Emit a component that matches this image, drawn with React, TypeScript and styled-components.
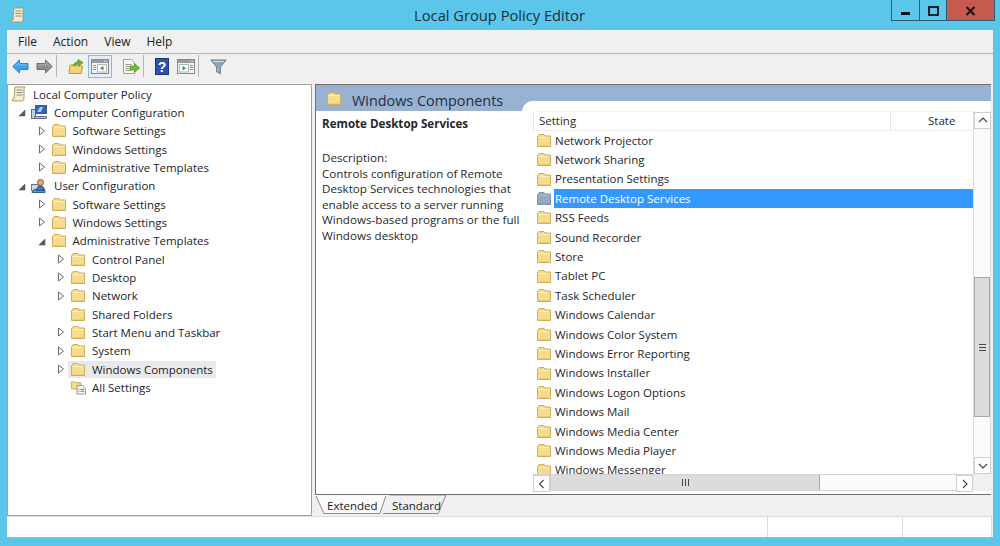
import React from "react";
import styled, { createGlobalStyle } from "styled-components";

const FONT = `"Open Sans", "Noto Sans", "Liberation Sans", sans-serif`;

const Global = createGlobalStyle`
  html, body { margin: 0; padding: 0; height: 100%; overflow: hidden; }
  body { font-family: ${FONT}; font-size: 11.5px; color: #1f1f1f; }
  * { box-sizing: border-box; }
`;

const Desktop = styled.div`
  width: 1000px;
  height: 546px;
  background: #5cc6ea;
  display: flex;
  flex-direction: column;
`;
const TitleBar = styled.header`
  height: 30px;
  display: grid;
  grid-template-columns: 1fr auto 1fr;
  align-items: start;
  padding: 0 5px 0 4px;
`;
const TitleIcon = styled.div`
  padding: 7px 0 0 6px;
  height: 30px;
`;
const TitleText = styled.div`
  font-size: 14.7px;
  line-height: 30px;
  color: #16303c;
`;
const Controls = styled.div`
  justify-self: end;
  display: flex;
  height: 21px;
  border: 1px solid #2b5f73;
  border-top: none;
`;
const Ctl = styled.div<{ $w: number; $close?: boolean }>`
  width: ${(p) => p.$w}px;
  padding-top: 2px;
  background: ${(p) => (p.$close ? "#c75a4f" : "transparent")};
  border-right: ${(p) => (p.$close ? "none" : "1px solid #2b5f73")};
  display: flex;
  align-items: center;
  justify-content: center;
`;
const Win = styled.div`
  flex: 1;
  margin: 0 7px 8px;
  background: #f0f0f0;
  display: flex;
  flex-direction: column;
  min-height: 0;
  border-bottom: 1px solid #a9b8c0;
`;
const MenuBar = styled.nav`
  height: 24px;
  display: flex;
  gap: 16px;
  padding-left: 11px;
  align-items: center;
  border-bottom: 1px solid #b6b6b6;
  color: #222;
  font-size: 12px;
`;
const Toolbar = styled.div`
  height: 30px;
  display: flex;
  align-items: flex-start;
  padding: 1px 0 0 1px;
`;
const ToolBtn = styled.div<{ $on?: boolean; $gap?: number }>`
  width: 24px;
  height: 23px;
  margin-left: ${(p) => p.$gap ?? 0}px;
  display: flex;
  align-items: center;
  justify-content: center;
  border: 1px solid ${(p) => (p.$on ? "#8ab9e6" : "transparent")};
  background: ${(p) => (p.$on ? "#e3eef8" : "transparent")};
`;
const ToolSep = styled.div<{ $after: number }>`
  width: 1px;
  height: 22px;
  background: #b4b4b4;
  margin-right: ${(p) => p.$after}px;
`;
const Main = styled.main`
  flex: 1;
  min-height: 0;
  display: flex;
  padding-right: 2px;
`;
const TreePanel = styled.section`
  width: 305px;
  height: 432px;
  background: #fff;
  border: 1px solid #a0a0a0;
  flex: none;
`;
const TreeRow = styled.div<{ $level: number }>`
  height: 18.33px;
  display: flex;
  align-items: center;
  padding-left: ${(p) => (p.$level < 0 ? 1 : 9 + p.$level * 19.5)}px;
`;
const ArrowSlot = styled.span`
  width: 12px;
  height: 12px;
  padding-right: 2px;
  flex: none;
  display: flex;
  align-items: center;
  justify-content: center;
`;
const TreeItem = styled.div<{ $hot?: boolean }>`
  display: flex;
  align-items: center;
  gap: 6px;
  height: 17px;
  padding: 0 3px 0 2px;
  background: ${(p) => (p.$hot ? "#e9e9e9" : "transparent")};
  color: #22242c;
  white-space: nowrap;
`;
const Splitter = styled.div`
  width: 3px;
  flex: none;
`;
const Pane = styled.section`
  flex: 1;
  min-width: 0;
  display: flex;
  flex-direction: column;
  background: #9ab2d1;
  border-top: 1px solid #6f6f6f;
  border-left: 1px solid #6f6f6f;
`;
const PaneBody = styled.div`
  flex: 1;
  min-height: 0;
  display: flex;
`;
const Info = styled.div`
  width: 206px;
  flex: none;
  display: flex;
  flex-direction: column;
`;
const InfoHead = styled.div`
  height: 26px;
  flex: none;
  display: flex;
  align-items: flex-start;
  padding: 6px 0 0 10px;
  gap: 10px;
`;
const InfoTitle = styled.div`
  font-size: 14.4px;
  line-height: 22px;
  margin-top: -1px;
  color: #1f2f45;
`;
const InfoBody = styled.div`
  flex: 1;
  background: #fff;
  padding: 5px 0 0 6px;
  font-size: 11.65px;
  line-height: 15.5px;
  color: #25282c;
  white-space: nowrap;
`;
const InfoName = styled.div`
  font-weight: 700;
  font-size: 11.6px;
  margin-bottom: 18px;
  line-height: 16px;
`;
const ListSide = styled.div`
  flex: 1;
  min-width: 0;
  margin-top: 16px;
  background: #fff;
  border-top-left-radius: 11px;
  padding: 10px 0 3px 11px;
  display: grid;
  grid-template-columns: 440px 18px;
  grid-template-rows: 1fr 17px;
  min-height: 0;
`;
const ListCol = styled.div`
  min-height: 0;
  overflow: hidden;
  display: flex;
  flex-direction: column;
`;
const Head = styled.div`
  height: 19.7px;
  flex: none;
  display: flex;
  line-height: 18px;
  border-bottom: 1px solid #ededed;
  border-top: 1px solid #f4f4f4;
  color: #2a2a2a;
`;
const HeadCell = styled.div<{ $w: number; $last?: boolean }>`
  width: ${(p) => p.$w}px;
  padding-left: ${(p) => (p.$last ? 37 : 5)}px;
  border-left: 1px solid #e6e6e6;
`;
const Row = styled.div`
  height: 19.4px;
  flex: none;
  display: flex;
  align-items: center;
  padding-left: 3px;
  gap: 2px;
  color: #24272c;
`;
const RowLabel = styled.div<{ $on?: boolean }>`
  flex: 1;
  height: 100%;
  line-height: 19px;
  padding-left: 1px;
  background: ${(p) => (p.$on ? "#3399ff" : "transparent")};
  color: ${(p) => (p.$on ? "#fff" : "inherit")};
`;
const VScroll = styled.div`
  border-left: 1px solid #dcdcdc;
  border-right: 1px solid #dcdcdc;
  display: flex;
  flex-direction: column;
  padding-top: 1px;
  background: #fbfbfb;
`;
const ScrollBtn = styled.div`
  flex: none;
  width: 17px;
  height: 17px;
  background: #fff;
  border: 1px solid #cfcfcf;
  display: flex;
  align-items: center;
  justify-content: center;
`;
const VThumb = styled.div<{ $top: number; $h: number }>`
  flex: none;
  margin-top: ${(p) => p.$top}px;
  height: ${(p) => p.$h}px;
  background: #dcdcdc;
  border: 1px solid #a8a8a8;
  display: flex;
  flex-direction: column;
  gap: 2px;
  align-items: center;
  justify-content: center;
`;
const VGrip = styled.i`
  display: block;
  width: 7px;
  height: 1px;
  background: #444;
`;
const VSpacer = styled.div`
  flex: 1;
`;
const HScroll = styled.div`
  display: flex;
  background: #fbfbfb;
  border-top: 1px solid #d4d4d4;
  border-bottom: 1px solid #d4d4d4;
`;
const HThumb = styled.div<{ $w: number }>`
  width: ${(p) => p.$w}px;
  flex: none;
  background: #dcdcdc;
  border-right: 1px solid #a8a8a8;
  border-left: 1px solid #d0d0d0;
  display: flex;
  gap: 2px;
  align-items: center;
  justify-content: center;
`;
const HGrip = styled.i`
  display: block;
  width: 1px;
  height: 7px;
  background: #444;
`;
const Corner = styled.div`
  background: #f0f0f0;
`;
const TabStrip = styled.div`
  height: 20px;
  flex: none;
  background: #f0f0f0;
  border-top: 1px solid #6f6f6f;
  margin-left: -1px;
  display: flex;
`;
const Tab = styled.div<{ $w: number; $active?: boolean; $ml?: number }>`
  position: relative;
  width: ${(p) => p.$w}px;
  height: 19px;
  margin-left: ${(p) => p.$ml ?? 0}px;
  padding-left: ${(p) => (p.$active ? 12 : 11)}px;
  line-height: 21px;
  color: #222;
  svg {
    position: absolute;
    left: 0;
    top: 0;
  }
  span {
    position: relative;
  }
`;
const TabGutter = styled.div`
  height: 1px;
`;
const StatusBar = styled.footer`
  height: 21px;
  flex: none;
  margin-top: 1px;
  background: #fff;
  display: flex;
  border-top: 1px solid #dcdcdc;
  margin-right: 1px;
  border-right: 1px solid #dcdcdc;
`;
const StatusCell = styled.div<{ $w?: number; $end?: boolean }>`
  flex: ${(p) => (p.$w ? "none" : 1)};
  width: ${(p) => (p.$w ? `${p.$w}px` : "auto")};
  border-right: ${(p) => (p.$end ? "none" : "1px solid #dadada")};
`;

const Folder = ({ sel }: { sel?: boolean }) => (
  <svg width="16" height="15" viewBox="0 0 16 15" style={{ flex: "none" }}>
    <path
      d="M1.5 13.5V3.5L3 2.5V1.5h5l1 1.5h5.5v10.5z"
      fill={sel ? "#92abbf" : "#f6dc8e"}
      stroke={sel ? "#8196a8" : "#d2ad55"}
    />
    <path d="M2.5 4.5h11" stroke={sel ? "#a9bfd0" : "#fcefc0"} />
    <path d="M2.5 12.5h11" stroke={sel ? "#8aa3b7" : "#f0cd72"} />
  </svg>
);

const Closed = () => (
  <svg width="8" height="10" viewBox="0 0 8 10">
    <path d="M1.5 1v8L6.5 5z" fill="#fff" stroke="#6a6a6a" />
  </svg>
);
const Open = () => (
  <svg width="8" height="10" viewBox="0 0 8 10">
    <path d="M7 3v6H1z" fill="#5a5a5a" stroke="#5a5a5a" strokeWidth=".6" />
  </svg>
);

const ScrollDoc = () => (
  <svg width="16" height="16" viewBox="0 0 16 16" style={{ flex: "none" }}>
    <path d="M4 1h10l-1 2v9c0 2-1 3-2 3H2c-1 0-1.500-2 0-2h1z" fill="#f6ecce" stroke="#a89a6e" />
    <path d="M5.500 4h6M5.500 6.500h6M5.500 9h6" stroke="#8d8d86" />
  </svg>
);

const Computer = () => (
  <svg width="17" height="16" viewBox="0 0 17 16" style={{ flex: "none" }}>
    <rect x="0.500" y="5.500" width="4" height="9" fill="#c8d0dc" stroke="#5d6d85" />
    <rect x="4.500" y="1.500" width="11" height="8" fill="#2f62c8" stroke="#42587c" />
    <path d="M6 8l3-5h3l-2 5z" fill="#9ed0f5" />
    <path d="M3.500 12.500h12v2h-12z" fill="#b9c4d2" stroke="#5d6d85" />
  </svg>
);

const UserCfg = () => (
  <svg width="17" height="16" viewBox="0 0 17 16" style={{ flex: "none" }}>
    <rect x="0.500" y="6.500" width="7" height="6" fill="#cfd6e0" stroke="#66758a" />
    <path d="M1 14.500h13v-2l-2-1H3z" fill="#5a94d6" stroke="#365f93" />
    <circle cx="9.500" cy="4.500" r="3" fill="#e0b06e" stroke="#7f5d2c" />
    <path d="M5.500 12.500c0-3 2-4.500 4-4.500s4 1.500 4 4.500z" fill="#3d78c0" stroke="#274f85" />
  </svg>
);

const AllSettings = () => (
  <svg width="16" height="16" viewBox="0 0 17 16" style={{ flex: "none" }}>
    <path d="M1.500 10V2.500h4l1 1h5V10z" fill="#f6dc8e" stroke="#cfa951" />
    <path d="M7.500 6.500h6l3 3v6h-9z" fill="#fbfbfb" stroke="#8f8f8f" />
    <path d="M9 10.500h1M11 10.500h4M9 12.500h1M11 12.500h4" stroke="#6a6a6a" />
  </svg>
);

const NavArrow = ({ flip, fill, stroke }: { flip?: boolean; fill: string; stroke: string }) => (
  <svg width="17" height="15" viewBox="0 0 17 15" style={{ transform: flip ? "scaleX(-1)" : undefined }}>
    <path d="M.8 7.500 7.500 1v3.500h8.500v6H7.500V14z" fill={fill} stroke={stroke} />
    <path d="M3 7.500 7 4v2h8" fill="none" stroke="#ffffff" strokeOpacity=".35" />
  </svg>
);

const UpFolder = () => (
  <svg width="16" height="17" viewBox="0 0 16 17">
    <path d="M1 15.500 2 7h4l1 1h7.500L13.500 15.500z" fill="#f3d477" stroke="#c09a40" />
    <path d="M5 8c1-3 3-4 5-4.500V1.500L15 4.500l-4 3.500V6C9 6.200 7 7 5 8z" fill="#6fb535" stroke="#4d8a20" strokeWidth=".7" />
  </svg>
);

const PaneIcon = ({ right }: { right?: boolean }) => (
  <svg width="18" height="15" viewBox="0 0 18 15">
    <rect x=".5" y=".5" width="17" height="14" fill="#f4f4f4" stroke="#8a8a8a" />
    <rect x="1" y="1" width="16" height="3" fill="#9a9a9a" />
    <path d="M13 2h1M15 2h1" stroke="#eee" />
    {right ? (
      <>
        <rect x="2.500" y="5.500" width="9" height="7.500" fill="#fff" stroke="#b5b5b5" />
        <path d="M5.500 7v4.500L9 9.250z" fill="#2f9a3c" />
        <path d="M13 6.500h3M13 8.500h3M13 10.500h3" stroke="#8d8d8d" />
      </>
    ) : (
      <>
        <path d="M2 6.500h3M2 8.500h3M2 10.500h3" stroke="#8d8d8d" />
        <rect x="6.500" y="5.500" width="9" height="7.500" fill="#fff" stroke="#b5b5b5" />
        <path d="M12.500 7v4.500L9 9.250z" fill="#2f9a3c" />
      </>
    )}
  </svg>
);

const ExportIcon = () => (
  <svg width="18" height="17" viewBox="0 0 18 17">
    <path d="M1.500 1.500h8l3 3v11h-11z" fill="#f8f6ea" stroke="#a0a090" />
    <path d="M3.500 6.500h6M3.500 8.500h4M3.500 10.500h4M3.500 12.500h5" stroke="#9a9a8a" />
    <path d="M8 8h4.500V5.500L17.500 10l-5 4.500V12H8z" fill="#6fbf3a" stroke="#4b8d24" strokeWidth=".7" />
  </svg>
);

const HelpIcon = () => (
  <svg width="14" height="17" viewBox="0 0 14 17">
    <rect x=".5" y=".5" width="13" height="16" fill="#2c50b4" stroke="#1d357c" />
    <text x="7" y="13.500" textAnchor="middle" fontFamily="Liberation Sans, sans-serif" fontSize="14" fontWeight="700" fill="#fff">?</text>
  </svg>
);

const FilterIcon = () => (
  <svg width="17" height="16" viewBox="0 0 17 16">
    <path d="M.8 1h15.400l-5.700 7v6.800l-4-2V8z" fill="#8da5b4" stroke="#6d8492" />
    <path d="M3 2.500h11" stroke="#d5e0e6" />
    <path d="M8 9v3" stroke="#b7c7d0" />
  </svg>
);

const Chev = ({ dir }: { dir: "up" | "down" | "left" | "right" }) => {
  const d = {
    up: "M1 6l4-4 4 4",
    down: "M1 3l4 4 4-4",
    left: "M6.500 1l-4 4 4 4",
    right: "M3 1l4 4-4 4",
  }[dir];
  return (
    <svg width="10" height="10" viewBox="0 0 10 10">
      <path d={d} fill="none" stroke="#404040" strokeWidth="1.100" />
    </svg>
  );
};

type Node = { level: number; label: string; arrow?: "open" | "closed"; icon?: "doc" | "pc" | "user" | "all"; hot?: boolean };

const tree: Node[] = [
  { level: -1, label: "Local Computer Policy", icon: "doc" },
  { level: 0, label: "Computer Configuration", arrow: "open", icon: "pc" },
  { level: 1, label: "Software Settings", arrow: "closed" },
  { level: 1, label: "Windows Settings", arrow: "closed" },
  { level: 1, label: "Administrative Templates", arrow: "closed" },
  { level: 0, label: "User Configuration", arrow: "open", icon: "user" },
  { level: 1, label: "Software Settings", arrow: "closed" },
  { level: 1, label: "Windows Settings", arrow: "closed" },
  { level: 1, label: "Administrative Templates", arrow: "open" },
  { level: 2, label: "Control Panel", arrow: "closed" },
  { level: 2, label: "Desktop", arrow: "closed" },
  { level: 2, label: "Network", arrow: "closed" },
  { level: 2, label: "Shared Folders" },
  { level: 2, label: "Start Menu and Taskbar", arrow: "closed" },
  { level: 2, label: "System", arrow: "closed" },
  { level: 2, label: "Windows Components", arrow: "closed", hot: true },
  { level: 2, label: "All Settings", icon: "all" },
];

const rows = [
  "Network Projector",
  "Network Sharing",
  "Presentation Settings",
  "Remote Desktop Services",
  "RSS Feeds",
  "Sound Recorder",
  "Store",
  "Tablet PC",
  "Task Scheduler",
  "Windows Calendar",
  "Windows Color System",
  "Windows Error Reporting",
  "Windows Installer",
  "Windows Logon Options",
  "Windows Mail",
  "Windows Media Center",
  "Windows Media Player",
  "Windows Messenger",
];

const nodeIcon = (n: Node) => {
  if (n.icon === "doc") return <ScrollDoc />;
  if (n.icon === "pc") return <Computer />;
  if (n.icon === "user") return <UserCfg />;
  if (n.icon === "all") return <AllSettings />;
  return <Folder />;
};

export default function App() {
  return (
    <Desktop>
      <Global />
      <TitleBar>
        <TitleIcon>
          <ScrollDoc />
        </TitleIcon>
        <TitleText>Local Group Policy Editor</TitleText>
        <Controls>
          <Ctl $w={28}>
            <svg width="11" height="10" viewBox="0 0 11 10">
              <rect x="1" y="6" width="9" height="3" fill="#111" />
            </svg>
          </Ctl>
          <Ctl $w={27}>
            <svg width="11" height="10" viewBox="0 0 11 10">
              <rect x="1" y="1" width="9" height="8" fill="none" stroke="#111" strokeWidth="1.800" />
            </svg>
          </Ctl>
          <Ctl $w={47} $close>
            <svg width="11" height="10" viewBox="0 0 11 10">
              <path d="M1.500 1l8 8M9.500 1l-8 8" stroke="#111" strokeWidth="2" />
            </svg>
          </Ctl>
        </Controls>
      </TitleBar>
      <Win>
        <MenuBar>
          <span>File</span>
          <span>Action</span>
          <span>View</span>
          <span>Help</span>
        </MenuBar>
        <Toolbar>
          <ToolBtn>
            <NavArrow fill="#3aa3ea" stroke="#2b7fc0" />
          </ToolBtn>
          <ToolBtn>
            <NavArrow flip fill="#8c8c8c" stroke="#6e6e6e" />
          </ToolBtn>
          <ToolSep $after={7} />
          <ToolBtn>
            <UpFolder />
          </ToolBtn>
          <ToolBtn $on>
            <PaneIcon />
          </ToolBtn>
          <ToolBtn $gap={7}>
            <ExportIcon />
          </ToolBtn>
          <ToolSep $after={6} />
          <ToolBtn>
            <HelpIcon />
          </ToolBtn>
          <ToolBtn>
            <PaneIcon right />
          </ToolBtn>
          <ToolSep $after={7} />
          <ToolBtn>
            <FilterIcon />
          </ToolBtn>
        </Toolbar>
        <Main>
          <TreePanel>
            {tree.map((n, i) => (
              <TreeRow key={i} $level={n.level}>
                {n.level >= 0 && (
                  <ArrowSlot>{n.arrow === "open" ? <Open /> : n.arrow === "closed" ? <Closed /> : null}</ArrowSlot>
                )}
                <TreeItem $hot={n.hot}>
                  {nodeIcon(n)}
                  <span>{n.label}</span>
                </TreeItem>
              </TreeRow>
            ))}
          </TreePanel>
          <Splitter />
          <Pane>
            <PaneBody>
              <Info>
                <InfoHead>
                  <Folder />
                  <InfoTitle>Windows Components</InfoTitle>
                </InfoHead>
                <InfoBody>
                  <InfoName>Remote Desktop Services</InfoName>
                  Description:
                  <br />
                  Controls configuration of Remote
                  <br />
                  Desktop Services technologies that
                  <br />
                  enable access to a server running
                  <br />
                  Windows-based programs or the full
                  <br />
                  Windows desktop
                </InfoBody>
              </Info>
              <ListSide>
                <ListCol>
                  <Head>
                    <HeadCell $w={357}>Setting</HeadCell>
                    <HeadCell $w={83} $last>
                      State
                    </HeadCell>
                  </Head>
                  {rows.map((r) => {
                    const on = r === "Remote Desktop Services";
                    return (
                      <Row key={r}>
                        <Folder sel={on} />
                        <RowLabel $on={on}>{r}</RowLabel>
                      </Row>
                    );
                  })}
                </ListCol>
                <VScroll>
                  <ScrollBtn>
                    <Chev dir="up" />
                  </ScrollBtn>
                  <VThumb $top={148} $h={140}>
                    <VGrip />
                    <VGrip />
                    <VGrip />
                  </VThumb>
                  <VSpacer />
                  <ScrollBtn>
                    <Chev dir="down" />
                  </ScrollBtn>
                </VScroll>
                <HScroll>
                  <ScrollBtn>
                    <Chev dir="left" />
                  </ScrollBtn>
                  <HThumb $w={270}>
                    <HGrip />
                    <HGrip />
                    <HGrip />
                  </HThumb>
                  <VSpacer />
                  <ScrollBtn>
                    <Chev dir="right" />
                  </ScrollBtn>
                </HScroll>
                <Corner />
              </ListSide>
            </PaneBody>
            <TabStrip>
              <Tab $w={72} $active>
                <svg width="72" height="19" viewBox="0 0 72 19">
                  <path d="M.5 0 9 18.500h56L71 0" fill="#fbfbfb" stroke="#8a8a8a" />
                  <path d="M0 0h72" stroke="#fbfbfb" strokeWidth="2" />
                </svg>
                <span>Extended</span>
              </Tab>
              <Tab $w={66} $ml={-6}>
                <svg width="66" height="19" viewBox="0 0 66 19">
                  <path d="M9 0h56l-8 18.500" fill="none" stroke="#8a8a8a" />
                  <path d="M2 18.500h55" stroke="#8a8a8a" />
                </svg>
                <span>Standard</span>
              </Tab>
            </TabStrip>
          </Pane>
        </Main>
        <TabGutter />
        <StatusBar>
          <StatusCell />
          <StatusCell $w={135} />
          <StatusCell $w={88} $end />
        </StatusBar>
      </Win>
    </Desktop>
  );
}
